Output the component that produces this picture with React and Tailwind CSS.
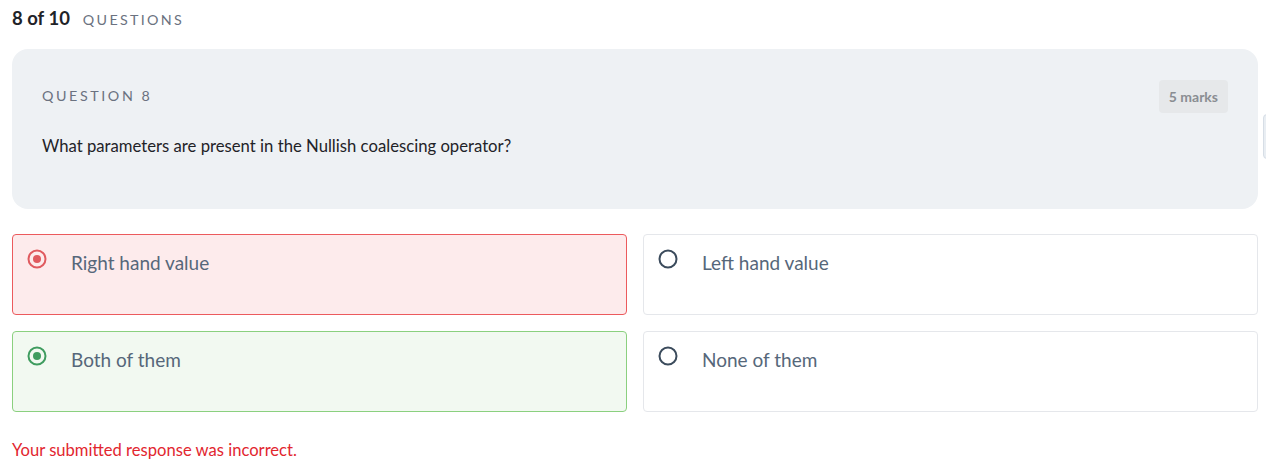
import React from "react";

const options = [
  { label: "Right hand value", state: "wrong" },
  { label: "Left hand value", state: "idle" },
  { label: "Both of them", state: "correct" },
  { label: "None of them", state: "idle" },
];

const Radio = ({ state }) => {
  const color =
    state === "wrong" ? "#e05a5f" : state === "correct" ? "#3f9c5f" : "#3b4b5c";
  return (
    <svg width="22" height="22" viewBox="0 0 22 22" className="shrink-0">
      <circle cx="11" cy="11" r="8.5" fill="none" stroke={color} strokeWidth="2" />
      {state !== "idle" && <circle cx="11" cy="11" r="4" fill={color} />}
    </svg>
  );
};

const OptionCard = ({ option }) => {
  const styles =
    option.state === "wrong"
      ? "bg-[#fdebec] border-[#ec5a5d]"
      : option.state === "correct"
      ? "bg-[#f2f9f1] border-[#8bd07f]"
      : "bg-white border-[#e5e7eb]";

  return (
    <div className={`h-[81px] rounded border ${styles} flex items-start gap-[23px] pl-[13px] pt-[13px]`}>
      <Radio state={option.state} />
      <span className="text-[19px] text-[#56677a] leading-[28px] mt-[1px]">{option.label}</span>
    </div>
  );
};

export default function App() {
  return (
    <div
      className="relative w-[1266px] h-[460px] bg-white overflow-hidden pl-[12px] pr-[8px]"
      style={{ fontFamily: "Lato, 'Open Sans', sans-serif" }}
    >
      {/* Header */}
      <div className="flex items-baseline gap-[13px] pt-[5px] h-[49px]">
        <span className="text-[18.5px] font-bold text-[#1f2328]">8 of 10</span>
        <span className="text-[14.3px] tracking-[0.16em] text-[#6b7280]">QUESTIONS</span>
      </div>

      {/* Question card */}
      <div className="h-[160px] rounded-[16px] bg-[#eef1f4] px-[30px] pt-[31px]">
        <div className="flex items-start justify-between">
          <span className="text-[14.3px] tracking-[0.18em] text-[#6b7280] mt-[5px]">QUESTION 8</span>
          <span className="rounded bg-[#e6e8ea] text-[14px] font-bold text-[#8a8d92] px-[10px] py-[7px] leading-[19px]">
            5 marks
          </span>
        </div>
        <p className="mt-[21px] text-[16.7px] text-[#1f2328]">
          What parameters are present in the Nullish coalescing operator?
        </p>
      </div>

      {/* Options */}
      <div className="grid grid-cols-2 gap-x-[16px] gap-y-[16px] mt-[25px]">
        {options.map((o) => (
          <OptionCard key={o.label} option={o} />
        ))}
      </div>

      <p className="mt-[26px] text-[16.6px] text-[#e2262f]">Your submitted response was incorrect.</p>

      {/* Edge handle */}
      <div className="absolute right-[-6px] top-[114px] w-[9px] h-[45px] rounded-l border border-[#d7dee6] bg-[#e9eef3]" />
    </div>
  );
}
